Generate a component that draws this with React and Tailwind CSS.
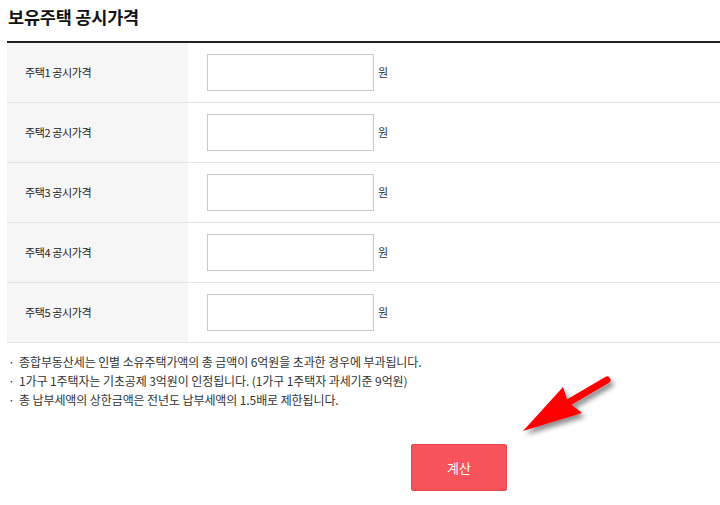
import React from "react";

const houses = [1, 2, 3, 4, 5];

const notes = [
  "종합부동산세는 인별 소유주택가액의 총 금액이 6억원을 초과한 경우에 부과됩니다.",
  "1가구 1주택자는 기초공제 3억원이 인정됩니다. (1가구 1주택자 과세기준 9억원)",
  "총 납부세액의 상한금액은 전년도 납부세액의 1.5배로 제한됩니다.",
];

function Arrow() {
  return (
    <svg
      className="absolute inset-0 pointer-events-none"
      width="720"
      height="505"
      viewBox="0 0 720 505"
    >
      <defs>
        <filter id="sh" x="-20%" y="-20%" width="150%" height="150%">
          <feDropShadow dx="3" dy="4" stdDeviation="2.5" floodColor="#000" floodOpacity="0.45" />
        </filter>
      </defs>
      <g filter="url(#sh)" fill="#ff0000">
        <line x1="566" y1="404" x2="607" y2="380" stroke="#ff0000" strokeWidth="7" strokeLinecap="round" />
        <polygon points="523,431 563,387 568,402 582,413" />
      </g>
    </svg>
  );
}

export default function App() {
  return (
    <div
      className="relative w-[720px] h-[505px] bg-white overflow-hidden text-[#333]"
      style={{ fontFamily: '"Noto Sans CJK KR", "Noto Sans", sans-serif' }}
    >
      {/* Title */}
      <div className="pl-2 pt-[4px] h-[41px]">
        <h2 className="text-[17.5px] font-bold text-[#111] tracking-[-0.2px] leading-[26px]">
          보유주택 공시가격
        </h2>
      </div>

      {/* Table */}
      <div className="ml-[7px] border-t-2 border-[#222]">
        {houses.map((n) => (
          <div key={n} className="flex h-[60px] border-b border-[#e3e3e3]">
            <div className="w-[181px] bg-[#f6f6f6] flex items-center pl-[18px] text-[11px] text-[#222] tracking-[-0.4px]">
              주택{n} 공시가격
            </div>
            <div className="flex items-center pl-[19px] gap-[4px]">
              <input
                type="text"
                className="w-[167px] h-[37px] border border-[#c8c8c8] bg-white outline-none"
              />
              <span className="text-[11px] text-[#333]">원</span>
            </div>
          </div>
        ))}
      </div>

      {/* Notes */}
      <ul className="mt-[9px] pl-2 text-[12px] leading-[19px] text-[#333] tracking-[-0.1px]">
        {notes.map((t, i) => (
          <li key={i} className="flex">
            <span className="w-[11px] shrink-0">·</span>
            <span>{t}</span>
          </li>
        ))}
      </ul>

      {/* Button */}
      <div className="flex pl-[411px] mt-[35px]">
        <button className="w-[96px] h-[47px] bg-[#f7535b] border border-[#e9464e] rounded-[2px] text-white text-[13px]">
          계산
        </button>
      </div>

      <Arrow />
    </div>
  );
}
